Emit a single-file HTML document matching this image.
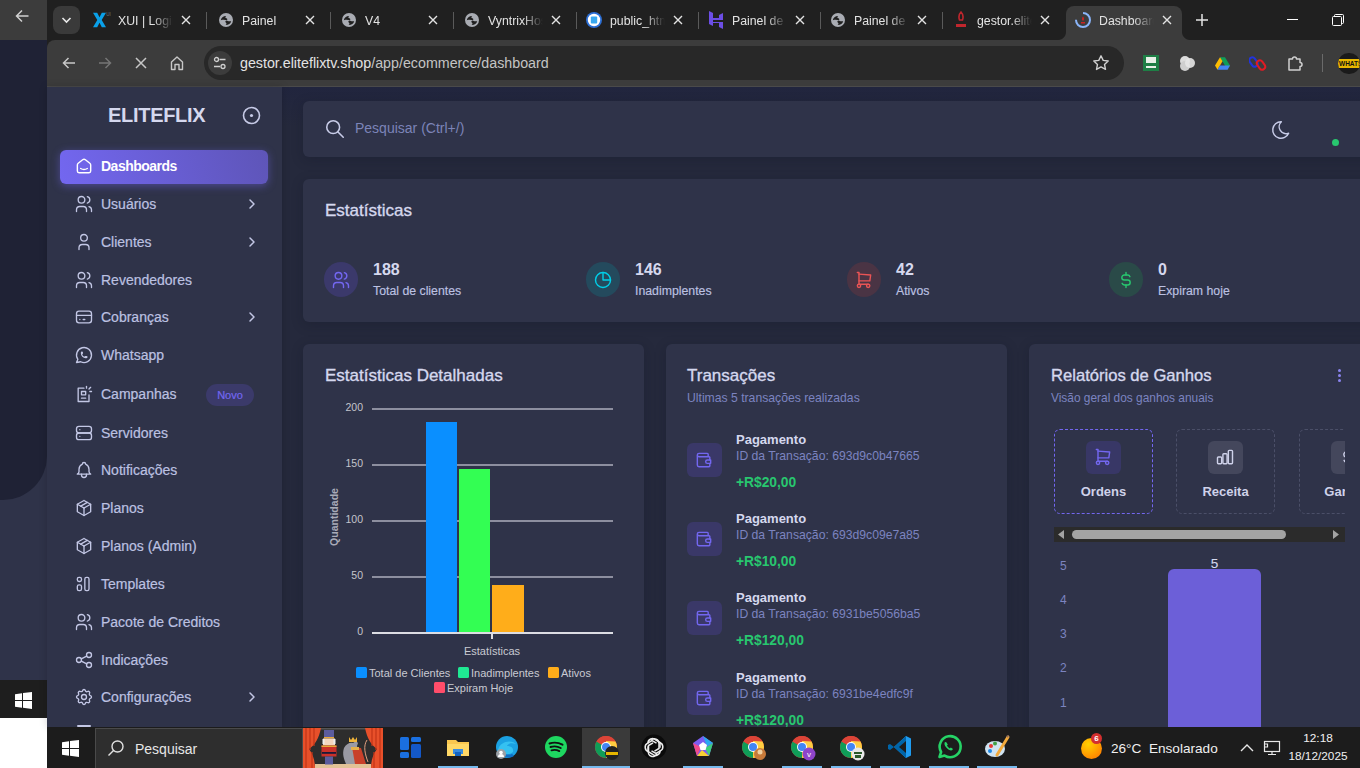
<!DOCTYPE html><html><head><meta charset="utf-8"><style>
*{margin:0;padding:0;box-sizing:border-box}
html,body{width:1360px;height:768px;overflow:hidden;background:#25293c;font-family:"Liberation Sans",sans-serif}
.a{position:absolute}
.t{position:absolute;white-space:nowrap}
.card{position:absolute;background:#2f3349;border-radius:6px;box-shadow:0 3px 12px rgba(15,20,34,.25)}
</style></head><body>
<div class="a" style="left:0;top:0;width:47px;height:40px;background:#3c3c3c"></div>
<svg class="a" style="left:14px;top:8px" width="16" height="16" viewBox="0 0 16 16"><path d="M14.5 8H2.5M8 2.5L2.5 8 8 13.5" stroke="#d0d0d0" stroke-width="1.5" fill="none"/></svg>
<div class="a" style="left:0;top:40px;width:47px;height:680px;background:#2f3349"></div>
<div class="a" style="left:0;top:40px;width:47px;height:460px;background:#1f2235;border-bottom-right-radius:44px"></div>
<div class="a" style="left:0;top:680px;width:47px;height:38px;background:#1e1e1e"></div>
<svg class="a" style="left:15px;top:692px" width="17" height="17" viewBox="0 0 17 17"><path fill="#fff" d="M0 2.3l7-1v6.8H0zM8 1.1L17 0v8.1H8zM0 9h7v6.8l-7-1zM8 9h9v8l-9-1.2z"/></svg>
<div class="a" style="left:0;top:718px;width:47px;height:50px;background:#ffffff"></div>

<div class="a" style="left:47px;top:0;width:1313px;height:40px;background:#202020"></div>
<div class="a" style="left:53px;top:6px;width:27px;height:28px;background:#3a3a3a;border-radius:8px"></div>
<svg class="a" style="left:61px;top:15px" width="11" height="10" viewBox="0 0 11 10"><path d="M1.5 3l4 4 4-4" stroke="#e8e8e8" stroke-width="1.6" fill="none"/></svg>
<div class="a" style="left:1066px;top:6px;width:116px;height:34px;background:#3c3c3c;border-radius:8px 8px 0 0"></div>
<div class="a" style="left:1058px;top:32px;width:8px;height:8px;background:radial-gradient(circle at 0 0,#202020 7.5px,#3c3c3c 8.5px)"></div>
<div class="a" style="left:1182px;top:32px;width:8px;height:8px;background:radial-gradient(circle at 100% 0,#202020 7.5px,#3c3c3c 8.5px)"></div>

<svg class="a" style="left:93px;top:12px" width="18" height="16" viewBox="0 0 18 16"><path d="M0 0.8h4.2l2.3 4.5 2.3-4.5H13L8.7 8 13 15.2H8.8L6.5 10.7 4.2 15.2H0L4.3 8z" fill="#0aa0e8"/><text x="13.3" y="4.2" font-size="4.5" fill="#777" font-family="Liberation Sans">UI</text></svg>
<div class="t" style="left:118px;top:14px;width:56px;overflow:hidden;font-size:12.3px;line-height:15px;color:#e3e3e3;-webkit-mask-image:linear-gradient(90deg,#000 62%,transparent 98%)">XUI | Login</div>
<svg class="a" style="left:181px;top:15px" width="10" height="10" viewBox="0 0 10 10"><path d="M1 1l8 8M9 1L1 9" stroke="#e3e3e3" stroke-width="1.4"/></svg>
<div class="a" style="left:206px;top:12px;width:1px;height:17px;background:#5a5a5a"></div>
<svg class="a" style="left:219px;top:13px" width="14" height="14" viewBox="0 0 14 14"><circle cx="7" cy="7" r="7" fill="#a9acb3"/><path d="M1.8 7.2C2.2 4.5 4.3 2.8 7.2 2.9 6.1 3.8 6 4.8 7.5 5.3 8.6 5.7 8.7 6.6 7.6 7.2 6 6.7 4 6.4 1.8 7.2z" fill="#202020"/><path d="M12.2 8.3C11.4 11 9.2 12.3 6.5 12.1 7.6 11.2 7.9 10.2 6.8 9.4 5.9 8.8 6.2 7.8 7.6 7.4 9.1 8.1 10.6 8.4 12.2 8.3z" fill="#202020"/></svg>
<div class="t" style="left:242px;top:14px;width:56px;overflow:hidden;font-size:12.3px;line-height:15px;color:#e3e3e3;-webkit-mask-image:linear-gradient(90deg,#000 62%,transparent 98%)">Painel</div>
<svg class="a" style="left:305px;top:15px" width="10" height="10" viewBox="0 0 10 10"><path d="M1 1l8 8M9 1L1 9" stroke="#e3e3e3" stroke-width="1.4"/></svg>
<div class="a" style="left:330px;top:12px;width:1px;height:17px;background:#5a5a5a"></div>
<svg class="a" style="left:342px;top:13px" width="14" height="14" viewBox="0 0 14 14"><circle cx="7" cy="7" r="7" fill="#a9acb3"/><path d="M1.8 7.2C2.2 4.5 4.3 2.8 7.2 2.9 6.1 3.8 6 4.8 7.5 5.3 8.6 5.7 8.7 6.6 7.6 7.2 6 6.7 4 6.4 1.8 7.2z" fill="#202020"/><path d="M12.2 8.3C11.4 11 9.2 12.3 6.5 12.1 7.6 11.2 7.9 10.2 6.8 9.4 5.9 8.8 6.2 7.8 7.6 7.4 9.1 8.1 10.6 8.4 12.2 8.3z" fill="#202020"/></svg>
<div class="t" style="left:365px;top:14px;width:56px;overflow:hidden;font-size:12.3px;line-height:15px;color:#e3e3e3;-webkit-mask-image:linear-gradient(90deg,#000 62%,transparent 98%)">V4</div>
<svg class="a" style="left:428px;top:15px" width="10" height="10" viewBox="0 0 10 10"><path d="M1 1l8 8M9 1L1 9" stroke="#e3e3e3" stroke-width="1.4"/></svg>
<div class="a" style="left:453px;top:12px;width:1px;height:17px;background:#5a5a5a"></div>
<svg class="a" style="left:465px;top:13px" width="14" height="14" viewBox="0 0 14 14"><circle cx="7" cy="7" r="7" fill="#a9acb3"/><path d="M1.8 7.2C2.2 4.5 4.3 2.8 7.2 2.9 6.1 3.8 6 4.8 7.5 5.3 8.6 5.7 8.7 6.6 7.6 7.2 6 6.7 4 6.4 1.8 7.2z" fill="#202020"/><path d="M12.2 8.3C11.4 11 9.2 12.3 6.5 12.1 7.6 11.2 7.9 10.2 6.8 9.4 5.9 8.8 6.2 7.8 7.6 7.4 9.1 8.1 10.6 8.4 12.2 8.3z" fill="#202020"/></svg>
<div class="t" style="left:488px;top:14px;width:56px;overflow:hidden;font-size:12.3px;line-height:15px;color:#e3e3e3;-webkit-mask-image:linear-gradient(90deg,#000 62%,transparent 98%)">VyntrixHost</div>
<svg class="a" style="left:551px;top:15px" width="10" height="10" viewBox="0 0 10 10"><path d="M1 1l8 8M9 1L1 9" stroke="#e3e3e3" stroke-width="1.4"/></svg>
<div class="a" style="left:576px;top:12px;width:1px;height:17px;background:#5a5a5a"></div>
<svg class="a" style="left:586px;top:12px" width="16" height="16" viewBox="0 0 16 16"><circle cx="8" cy="8" r="8" fill="#2c6fd6"/><circle cx="8" cy="8" r="6.2" fill="#fff"/><rect x="4.8" y="4.5" width="6.4" height="7" rx="1" fill="#38a8f0"/></svg>
<div class="t" style="left:610px;top:14px;width:56px;overflow:hidden;font-size:12.3px;line-height:15px;color:#e3e3e3;-webkit-mask-image:linear-gradient(90deg,#000 62%,transparent 98%)">public_html</div>
<svg class="a" style="left:673px;top:15px" width="10" height="10" viewBox="0 0 10 10"><path d="M1 1l8 8M9 1L1 9" stroke="#e3e3e3" stroke-width="1.4"/></svg>
<div class="a" style="left:698px;top:12px;width:1px;height:17px;background:#5a5a5a"></div>
<svg class="a" style="left:708px;top:11px" width="16" height="18" viewBox="0 0 16 18"><path fill="#6c4ee6" d="M1 0l4 2v5h6V4l4-2v7H5v2h10v7l-4-2v-4H5v3l-4-2z"/></svg>
<div class="t" style="left:732px;top:14px;width:56px;overflow:hidden;font-size:12.3px;line-height:15px;color:#e3e3e3;-webkit-mask-image:linear-gradient(90deg,#000 62%,transparent 98%)">Painel de</div>
<svg class="a" style="left:795px;top:15px" width="10" height="10" viewBox="0 0 10 10"><path d="M1 1l8 8M9 1L1 9" stroke="#e3e3e3" stroke-width="1.4"/></svg>
<div class="a" style="left:820px;top:12px;width:1px;height:17px;background:#5a5a5a"></div>
<svg class="a" style="left:831px;top:13px" width="14" height="14" viewBox="0 0 14 14"><circle cx="7" cy="7" r="7" fill="#a9acb3"/><path d="M1.8 7.2C2.2 4.5 4.3 2.8 7.2 2.9 6.1 3.8 6 4.8 7.5 5.3 8.6 5.7 8.7 6.6 7.6 7.2 6 6.7 4 6.4 1.8 7.2z" fill="#202020"/><path d="M12.2 8.3C11.4 11 9.2 12.3 6.5 12.1 7.6 11.2 7.9 10.2 6.8 9.4 5.9 8.8 6.2 7.8 7.6 7.4 9.1 8.1 10.6 8.4 12.2 8.3z" fill="#202020"/></svg>
<div class="t" style="left:854px;top:14px;width:56px;overflow:hidden;font-size:12.3px;line-height:15px;color:#e3e3e3;-webkit-mask-image:linear-gradient(90deg,#000 62%,transparent 98%)">Painel de</div>
<svg class="a" style="left:917px;top:15px" width="10" height="10" viewBox="0 0 10 10"><path d="M1 1l8 8M9 1L1 9" stroke="#e3e3e3" stroke-width="1.4"/></svg>
<div class="a" style="left:942px;top:12px;width:1px;height:17px;background:#5a5a5a"></div>
<svg class="a" style="left:953px;top:11px" width="16" height="18" viewBox="0 0 16 18"><path fill="none" stroke="#c0262d" stroke-width="1.6" d="M8 1c2 2 2.5 5 1.5 8h-3C5.5 6 6 3 8 1z"/><path fill="#c0262d" d="M3 13h10v3H3z"/></svg>
<div class="t" style="left:977px;top:14px;width:56px;overflow:hidden;font-size:12.3px;line-height:15px;color:#e3e3e3;-webkit-mask-image:linear-gradient(90deg,#000 62%,transparent 98%)">gestor.elite</div>
<svg class="a" style="left:1040px;top:15px" width="10" height="10" viewBox="0 0 10 10"><path d="M1 1l8 8M9 1L1 9" stroke="#e3e3e3" stroke-width="1.4"/></svg>
<svg class="a" style="left:1074px;top:11px" width="18" height="18" viewBox="0 0 18 18"><circle cx="9" cy="9" r="7" stroke="#8ab4f8" stroke-width="2" fill="none" stroke-dasharray="33 11" transform="rotate(-90 9 9)"/><path d="M9 5.5c1 1 1.2 2.5.7 4h-1.4c-.5-1.5-.3-3 .7-4z" fill="#c22"/><path d="M7 11h4v1.5H7z" fill="#c22"/></svg>
<div class="t" style="left:1099px;top:14px;width:56px;overflow:hidden;font-size:12.3px;line-height:15px;color:#e3e3e3;-webkit-mask-image:linear-gradient(90deg,#000 62%,transparent 98%)">Dashboard</div>
<svg class="a" style="left:1162px;top:15px" width="10" height="10" viewBox="0 0 10 10"><path d="M1 1l8 8M9 1L1 9" stroke="#e3e3e3" stroke-width="1.4"/></svg>
<svg class="a" style="left:1195px;top:13px" width="14" height="14" viewBox="0 0 14 14"><path d="M7 1v12M1 7h12" stroke="#e3e3e3" stroke-width="1.5"/></svg>
<div class="a" style="left:1287px;top:19px;width:11px;height:1px;background:#fff"></div>
<svg class="a" style="left:1332px;top:14px" width="12" height="12" viewBox="0 0 12 12"><path d="M2.5 2.5V1.5a1 1 0 0 1 1-1h7a1 1 0 0 1 1 1v7a1 1 0 0 1-1 1H9.5" stroke="#fff" fill="none"/><rect x="0.5" y="2.5" width="9" height="9" rx="1" stroke="#fff" fill="#202020"/></svg>

<div class="a" style="left:47px;top:40px;width:12px;height:12px;background:#202020"></div>
<div class="a" style="left:47px;top:40px;width:1313px;height:46px;background:#3c3c3c;border-top-left-radius:8px"></div>
<div class="a" style="left:47px;top:86px;width:1313px;height:1px;background:#4a4a4a"></div>
<svg class="a" style="left:61px;top:55px" width="16" height="16" viewBox="0 0 16 16"><path d="M14 8H2.5M7.5 3L2.5 8l5 5" stroke="#c7c7c7" stroke-width="1.5" fill="none"/></svg>
<svg class="a" style="left:97px;top:55px" width="16" height="16" viewBox="0 0 16 16"><path d="M2 8h11.5M8.5 3l5 5-5 5" stroke="#757575" stroke-width="1.5" fill="none"/></svg>
<svg class="a" style="left:135px;top:57px" width="12" height="12" viewBox="0 0 12 12"><path d="M1 1l10 10M11 1L1 11" stroke="#c7c7c7" stroke-width="1.5"/></svg>
<svg class="a" style="left:169px;top:55px" width="16" height="16" viewBox="0 0 16 16"><path d="M2.5 14.5V7L8 2l5.5 5v7.5h-3.5v-5h-4v5z" stroke="#c7c7c7" stroke-width="1.4" fill="none" stroke-linejoin="round"/></svg>
<div class="a" style="left:204px;top:46px;width:920px;height:34px;background:#282828;border-radius:17px"></div>
<div class="a" style="left:208px;top:51px;width:24px;height:24px;background:#3c3c3c;border-radius:12px"></div>
<svg class="a" style="left:212px;top:55px" width="16" height="16" viewBox="0 0 16 16"><circle cx="4.5" cy="4.5" r="2" stroke="#d0d0d0" stroke-width="1.3" fill="none"/><path d="M7.5 4.5h6M2 11.5h6" stroke="#d0d0d0" stroke-width="1.4"/><circle cx="11" cy="11.5" r="2" stroke="#d0d0d0" stroke-width="1.3" fill="none"/></svg>
<div class="t" style="left:240px;top:55px;font-size:14.25px;line-height:17px;color:#e3e3e3">gestor.eliteflixtv.shop<span style="color:#c4c4c4">/app/ecommerce/dashboard</span></div>
<svg class="a" style="left:1092px;top:54px" width="18" height="18" viewBox="0 0 18 18"><path d="M9 1.8l2.2 4.6 5 .6-3.7 3.4 1 5L9 12.9l-4.5 2.5 1-5L1.8 7l5-.6z" stroke="#d0d0d0" stroke-width="1.4" fill="none" stroke-linejoin="round"/></svg>
<div class="a" style="left:1143px;top:55px;width:16px;height:16px;background:#1e7e45"></div>
<div class="a" style="left:1146px;top:57px;width:10px;height:11px;background:#e8f0e8"></div>
<div class="a" style="left:1146px;top:63px;width:10px;height:3px;background:#1e7e45"></div>
<div class="a" style="left:1180px;top:56px;width:10px;height:10px;border-radius:5px;background:#dcdcdc"></div>
<div class="a" style="left:1180px;top:61px;width:10px;height:10px;border-radius:5px;background:#cfcfcf"></div>
<div class="a" style="left:1185px;top:58px;width:10px;height:10px;border-radius:5px;background:#e6e6e6;opacity:.9"></div>
<svg class="a" style="left:1215px;top:56px" width="15" height="14" viewBox="0 0 18 16"><path fill="#0f9d58" d="M6 1h6l6 10-3 5z"/><path fill="#fbbc04" d="M6 1L0 11l3 5 6-10z"/><path fill="#4285f4" d="M3 16h12l3-5H6z"/></svg>
<svg class="a" style="left:1249px;top:54px" width="18" height="18" viewBox="0 0 18 18"><rect x="1.5" y="3" width="6" height="10" rx="3" transform="rotate(-35 4.5 8)" stroke="#2233dd" stroke-width="2" fill="none"/><rect x="9" y="6" width="6" height="10" rx="3" transform="rotate(-35 12 11)" stroke="#e01b24" stroke-width="2" fill="none"/></svg>
<svg class="a" style="left:1286px;top:54px" width="18" height="18" viewBox="0 0 18 18"><path d="M3 5h3.5a2 2 0 1 1 4 0H14v3.5a2 2 0 1 1 0 4V16H3z" stroke="#d0d0d0" stroke-width="1.5" fill="none" stroke-linejoin="round"/></svg>
<div class="a" style="left:1322px;top:54px;width:1px;height:18px;background:#6a6a6a"></div>
<div class="a" style="left:1338px;top:53px;width:22px;height:21px;border-radius:11px;background:#1a1a1a;overflow:hidden"><div style="position:absolute;left:0;top:6px;width:22px;height:9px;background:#e8b800"></div><div style="position:absolute;left:1px;top:7px;font:bold 6.5px/7px 'Liberation Sans';color:#111">WHATS</div></div>

<div class="a" style="left:47px;top:87px;width:1313px;height:640px;background:#25293c"></div>
<div class="a" style="left:281px;top:87px;width:1079px;height:40px;background:linear-gradient(#21253e,#25293c)"></div>
<div class="a" style="left:47px;top:87px;width:235px;height:640px;background:#2f3349;box-shadow:0 0 8px rgba(0,0,0,.18)"></div>
<div class="t" style="left:108px;top:103px;font:bold 20px/24px 'Liberation Sans';letter-spacing:-0.3px;color:#d5d8ee">ELITEFLIX</div>
<svg class="a" style="left:242px;top:106px" width="19" height="19" viewBox="0 0 19 19"><circle cx="9.5" cy="9.5" r="8" stroke="#c6cae6" stroke-width="1.6" fill="none"/><circle cx="9.5" cy="9.5" r="1.6" fill="#c6cae6"/></svg>
<div class="a" style="left:60px;top:150px;width:208px;height:34px;border-radius:6px;background:linear-gradient(72deg,#7367f0 0%,#5e55b8 100%);box-shadow:0 2px 8px rgba(115,103,240,.45)"></div>
<svg class="a" style="left:74px;top:156px" width="20" height="20" viewBox="0 0 24 24" fill="none" stroke="#ffffff" stroke-width="1.7" stroke-linecap="round" stroke-linejoin="round"><path d="M19 8.71l-5.333 -4.148a2.666 2.666 0 0 0 -3.274 0l-5.334 4.148a2.665 2.665 0 0 0 -1.029 2.105v7.2a2 2 0 0 0 2 2h12a2 2 0 0 0 2 -2v-7.2c0 -.823 -.38 -1.6 -1.03 -2.105"/><path d="M16 15c-2.21 1.333 -5.792 1.333 -8 0"/></svg>
<div class="t" style="left:101px;top:158px;font:bold 14px/16px 'Liberation Sans';letter-spacing:-0.5px;color:#ffffff">Dashboards</div>
<svg class="a" style="left:74px;top:194px" width="20" height="20" viewBox="0 0 24 24" fill="none" stroke="#c3c7e5" stroke-width="1.6" stroke-linecap="round" stroke-linejoin="round"><path d="M5 7a4 4 0 1 0 8 0a4 4 0 1 0 -8 0"/><path d="M3 21v-2a4 4 0 0 1 4 -4h4a4 4 0 0 1 4 4v2"/><path d="M16 3.13a4 4 0 0 1 0 7.75"/><path d="M21 21v-2a4 4 0 0 0 -3 -3.85"/></svg>
<div class="t" style="left:101px;top:196px;font:14px/16px 'Liberation Sans';color:#bcc1e1;-webkit-text-stroke:0.2px #bcc1e1">Usuários</div>
<svg class="a" style="left:247px;top:198px" width="10" height="12" viewBox="0 0 10 12"><path d="M3 2l4 4-4 4" stroke="#c3c7e5" stroke-width="1.5" fill="none" stroke-linecap="round" stroke-linejoin="round"/></svg>
<svg class="a" style="left:74px;top:232px" width="20" height="20" viewBox="0 0 24 24" fill="none" stroke="#c3c7e5" stroke-width="1.6" stroke-linecap="round" stroke-linejoin="round"><path d="M8 7a4 4 0 1 0 8 0a4 4 0 0 0 -8 0"/><path d="M6 21v-2a4 4 0 0 1 4 -4h4a4 4 0 0 1 4 4v2"/></svg>
<div class="t" style="left:101px;top:234px;font:14px/16px 'Liberation Sans';color:#bcc1e1;-webkit-text-stroke:0.2px #bcc1e1">Clientes</div>
<svg class="a" style="left:247px;top:236px" width="10" height="12" viewBox="0 0 10 12"><path d="M3 2l4 4-4 4" stroke="#c3c7e5" stroke-width="1.5" fill="none" stroke-linecap="round" stroke-linejoin="round"/></svg>
<svg class="a" style="left:74px;top:270px" width="20" height="20" viewBox="0 0 24 24" fill="none" stroke="#c3c7e5" stroke-width="1.6" stroke-linecap="round" stroke-linejoin="round"><path d="M5 7a4 4 0 1 0 8 0a4 4 0 1 0 -8 0"/><path d="M3 21v-2a4 4 0 0 1 4 -4h4a4 4 0 0 1 4 4v2"/><path d="M16 3.13a4 4 0 0 1 0 7.75"/><path d="M21 21v-2a4 4 0 0 0 -3 -3.85"/></svg>
<div class="t" style="left:101px;top:272px;font:14px/16px 'Liberation Sans';color:#bcc1e1;-webkit-text-stroke:0.2px #bcc1e1">Revendedores</div>
<svg class="a" style="left:74px;top:307px" width="20" height="20" viewBox="0 0 24 24" fill="none" stroke="#c3c7e5" stroke-width="1.6" stroke-linecap="round" stroke-linejoin="round"><path d="M3 8a3 3 0 0 1 3 -3h12a3 3 0 0 1 3 3v8a3 3 0 0 1 -3 3h-12a3 3 0 0 1 -3 -3z"/><path d="M3 10l18 0"/><path d="M7 15l.01 0"/><path d="M11 15l2 0"/></svg>
<div class="t" style="left:101px;top:309px;font:14px/16px 'Liberation Sans';color:#bcc1e1;-webkit-text-stroke:0.2px #bcc1e1">Cobranças</div>
<svg class="a" style="left:247px;top:311px" width="10" height="12" viewBox="0 0 10 12"><path d="M3 2l4 4-4 4" stroke="#c3c7e5" stroke-width="1.5" fill="none" stroke-linecap="round" stroke-linejoin="round"/></svg>
<svg class="a" style="left:74px;top:345px" width="20" height="20" viewBox="0 0 24 24" fill="none" stroke="#c3c7e5" stroke-width="1.6" stroke-linecap="round" stroke-linejoin="round"><path d="M3 21l1.65 -3.8a9 9 0 1 1 3.4 2.9l-5.05 .9"/><path d="M9 10a.5 .5 0 0 0 1 0v-1a.5 .5 0 0 0 -1 0v1a5 5 0 0 0 5 5h1a.5 .5 0 0 0 0 -1h-1a.5 .5 0 0 0 0 1"/></svg>
<div class="t" style="left:101px;top:347px;font:14px/16px 'Liberation Sans';color:#bcc1e1;-webkit-text-stroke:0.2px #bcc1e1">Whatsapp</div>
<svg class="a" style="left:74px;top:384px" width="20" height="20" viewBox="0 0 24 24" fill="none" stroke="#c3c7e5" stroke-width="1.6" stroke-linecap="round" stroke-linejoin="round"><path d="M11.933 5h-6.933v16h13v-8"/><path d="M14 17h-5"/><path d="M9 13h5v-4h-5z"/><path d="M15 5v-2"/><path d="M18 6l2 -2"/><path d="M19 9h2"/></svg>
<div class="t" style="left:101px;top:386px;font:14px/16px 'Liberation Sans';color:#bcc1e1;-webkit-text-stroke:0.2px #bcc1e1">Campanhas</div>
<svg class="a" style="left:74px;top:423px" width="20" height="20" viewBox="0 0 24 24" fill="none" stroke="#c3c7e5" stroke-width="1.6" stroke-linecap="round" stroke-linejoin="round"><path d="M3 7a3 3 0 0 1 3 -3h12a3 3 0 0 1 3 3v2a3 3 0 0 1 -3 3h-12a3 3 0 0 1 -3 -3z"/><path d="M3 15a3 3 0 0 1 3 -3h12a3 3 0 0 1 3 3v2a3 3 0 0 1 -3 3h-12a3 3 0 0 1 -3 -3z"/><path d="M7 8l0 .01"/><path d="M7 16l0 .01"/></svg>
<div class="t" style="left:101px;top:425px;font:14px/16px 'Liberation Sans';color:#bcc1e1;-webkit-text-stroke:0.2px #bcc1e1">Servidores</div>
<svg class="a" style="left:74px;top:460px" width="20" height="20" viewBox="0 0 24 24" fill="none" stroke="#c3c7e5" stroke-width="1.6" stroke-linecap="round" stroke-linejoin="round"><path d="M10 5a2 2 0 1 1 4 0a7 7 0 0 1 4 6v3a4 4 0 0 0 2 3h-16a4 4 0 0 0 2 -3v-3a7 7 0 0 1 4 -6"/><path d="M9 17v1a3 3 0 0 0 6 0v-1"/></svg>
<div class="t" style="left:101px;top:462px;font:14px/16px 'Liberation Sans';color:#bcc1e1;-webkit-text-stroke:0.2px #bcc1e1">Notificações</div>
<svg class="a" style="left:74px;top:498px" width="20" height="20" viewBox="0 0 24 24" fill="none" stroke="#c3c7e5" stroke-width="1.6" stroke-linecap="round" stroke-linejoin="round"><path d="M12 3l8 4.5l0 9l-8 4.5l-8 -4.5l0 -9l8 -4.5"/><path d="M12 12l8 -4.5"/><path d="M12 12l0 9"/><path d="M12 12l-8 -4.5"/><path d="M16 5.25l-8 4.5"/></svg>
<div class="t" style="left:101px;top:500px;font:14px/16px 'Liberation Sans';color:#bcc1e1;-webkit-text-stroke:0.2px #bcc1e1">Planos</div>
<svg class="a" style="left:74px;top:536px" width="20" height="20" viewBox="0 0 24 24" fill="none" stroke="#c3c7e5" stroke-width="1.6" stroke-linecap="round" stroke-linejoin="round"><path d="M12 3l8 4.5l0 9l-8 4.5l-8 -4.5l0 -9l8 -4.5"/><path d="M12 12l8 -4.5"/><path d="M12 12l0 9"/><path d="M12 12l-8 -4.5"/><path d="M16 5.25l-8 4.5"/></svg>
<div class="t" style="left:101px;top:538px;font:14px/16px 'Liberation Sans';color:#bcc1e1;-webkit-text-stroke:0.2px #bcc1e1">Planos (Admin)</div>
<svg class="a" style="left:74px;top:574px" width="20" height="20" viewBox="0 0 24 24" fill="none" stroke="#c3c7e5" stroke-width="1.6" stroke-linecap="round" stroke-linejoin="round"><path d="M4 6a2 2 0 0 1 2 -2h1a2 2 0 0 1 2 2v1a2 2 0 0 1 -2 2h-1a2 2 0 0 1 -2 -2z"/><path d="M4 15a2 2 0 0 1 2 -2h1a2 2 0 0 1 2 2v3a2 2 0 0 1 -2 2h-1a2 2 0 0 1 -2 -2z"/><path d="M13 6a2 2 0 0 1 2 -2h1a2 2 0 0 1 2 2v12a2 2 0 0 1 -2 2h-1a2 2 0 0 1 -2 -2z"/></svg>
<div class="t" style="left:101px;top:576px;font:14px/16px 'Liberation Sans';color:#bcc1e1;-webkit-text-stroke:0.2px #bcc1e1">Templates</div>
<svg class="a" style="left:74px;top:612px" width="20" height="20" viewBox="0 0 24 24" fill="none" stroke="#c3c7e5" stroke-width="1.6" stroke-linecap="round" stroke-linejoin="round"><path d="M5 7a4 4 0 1 0 8 0a4 4 0 1 0 -8 0"/><path d="M3 21v-2a4 4 0 0 1 4 -4h4a4 4 0 0 1 4 4v2"/><path d="M16 3.13a4 4 0 0 1 0 7.75"/><path d="M21 21v-2a4 4 0 0 0 -3 -3.85"/></svg>
<div class="t" style="left:101px;top:614px;font:14px/16px 'Liberation Sans';color:#bcc1e1;-webkit-text-stroke:0.2px #bcc1e1">Pacote de Creditos</div>
<svg class="a" style="left:74px;top:650px" width="20" height="20" viewBox="0 0 24 24" fill="none" stroke="#c3c7e5" stroke-width="1.6" stroke-linecap="round" stroke-linejoin="round"><path d="M3 12a3 3 0 1 0 6 0a3 3 0 1 0 -6 0"/><path d="M15 6a3 3 0 1 0 6 0a3 3 0 1 0 -6 0"/><path d="M15 18a3 3 0 1 0 6 0a3 3 0 1 0 -6 0"/><path d="M8.7 10.7l6.6 -3.4"/><path d="M8.7 13.3l6.6 3.4"/></svg>
<div class="t" style="left:101px;top:652px;font:14px/16px 'Liberation Sans';color:#bcc1e1;-webkit-text-stroke:0.2px #bcc1e1">Indicações</div>
<svg class="a" style="left:74px;top:687px" width="20" height="20" viewBox="0 0 24 24" fill="none" stroke="#c3c7e5" stroke-width="1.6" stroke-linecap="round" stroke-linejoin="round"><path d="M10.325 4.317c.426 -1.756 2.924 -1.756 3.35 0a1.724 1.724 0 0 0 2.573 1.066c1.543 -.94 3.31 .826 2.37 2.37a1.724 1.724 0 0 0 1.065 2.572c1.756 .426 1.756 2.924 0 3.35a1.724 1.724 0 0 0 -1.066 2.573c.94 1.543 -.826 3.31 -2.37 2.37a1.724 1.724 0 0 0 -2.572 1.065c-.426 1.756 -2.924 1.756 -3.35 0a1.724 1.724 0 0 0 -2.573 -1.066c-1.543 .94 -3.31 -.826 -2.37 -2.37a1.724 1.724 0 0 0 -1.065 -2.572c-1.756 -.426 -1.756 -2.924 0 -3.35a1.724 1.724 0 0 0 1.066 -2.573c-.94 -1.543 .826 -3.31 2.37 -2.37c1 .608 2.296 .07 2.572 -1.065z"/><path d="M9 12a3 3 0 1 0 6 0a3 3 0 0 0 -6 0"/></svg>
<div class="t" style="left:101px;top:689px;font:14px/16px 'Liberation Sans';color:#bcc1e1;-webkit-text-stroke:0.2px #bcc1e1">Configurações</div>
<svg class="a" style="left:247px;top:691px" width="10" height="12" viewBox="0 0 10 12"><path d="M3 2l4 4-4 4" stroke="#c3c7e5" stroke-width="1.5" fill="none" stroke-linecap="round" stroke-linejoin="round"/></svg>
<div class="a" style="left:206px;top:384px;width:48px;height:22px;border-radius:11px;background:#3b3a6a"></div>
<div class="t" style="left:206px;top:385px;width:48px;text-align:center;font:11px/21px 'Liberation Sans';color:#7367f0;-webkit-text-stroke:0.2px #7367f0">Novo</div>
<div class="a" style="left:77px;top:725px;width:14px;height:2px;background:#c3c7e5;border-radius:1px"></div>
<div class="card" style="left:303px;top:101px;width:1100px;height:56px"></div>
<svg class="a" style="left:324px;top:118px" width="22" height="22" viewBox="0 0 24 24" fill="none" stroke="#c8cce8" stroke-width="1.7" stroke-linecap="round"><circle cx="10" cy="10" r="7"/><path d="M21 21l-6-6"/></svg>
<div class="t" style="left:355px;top:120px;font:14px/17px 'Liberation Sans';color:#7c84b8">Pesquisar (Ctrl+/)</div>
<svg class="a" style="left:1270px;top:119px" width="22" height="22" viewBox="0 0 24 24" fill="none" stroke="#c8cce8" stroke-width="1.6" stroke-linecap="round" stroke-linejoin="round"><path d="M12 3c.132 0 .263 0 .393 0a7.5 7.5 0 0 0 7.92 12.446a9 9 0 1 1 -8.313 -12.454z"/></svg>
<div class="a" style="left:1332px;top:139px;width:7px;height:7px;border-radius:4px;background:#28c76f"></div>
<div class="card" style="left:303px;top:179px;width:1100px;height:143px"></div>
<div class="t" style="left:325px;top:201px;font:17px/20px 'Liberation Sans';color:#d5d8ee;-webkit-text-stroke:0.35px #d5d8ee">Estatísticas</div>
<div class="a" style="left:324px;top:262px;width:34px;height:35px;border-radius:18px;background:#3b396b"></div>
<svg class="a" style="left:331px;top:270px" width="20" height="20" viewBox="0 0 24 24" fill="none" stroke="#7367f0" stroke-width="1.7" stroke-linecap="round" stroke-linejoin="round"><path d="M5 7a4 4 0 1 0 8 0a4 4 0 1 0 -8 0"/><path d="M3 21v-2a4 4 0 0 1 4 -4h4a4 4 0 0 1 4 4v2"/><path d="M16 3.13a4 4 0 0 1 0 7.75"/><path d="M21 21v-2a4 4 0 0 0 -3 -3.85"/></svg>
<div class="t" style="left:373px;top:260px;font:bold 16px/19px 'Liberation Sans';color:#d5d8ee">188</div>
<div class="t" style="left:373px;top:284px;font:12.3px/15px 'Liberation Sans';color:#bcc1e1;-webkit-text-stroke:0.15px #bcc1e1">Total de clientes</div>
<div class="a" style="left:586px;top:262px;width:34px;height:35px;border-radius:18px;background:#244a5d"></div>
<svg class="a" style="left:593px;top:270px" width="20" height="20" viewBox="0 0 24 24" fill="none" stroke="#00cfe8" stroke-width="1.7" stroke-linecap="round" stroke-linejoin="round"><circle cx="12" cy="12" r="9"/><path d="M12 3v9h9"/></svg>
<div class="t" style="left:635px;top:260px;font:bold 16px/19px 'Liberation Sans';color:#d5d8ee">146</div>
<div class="t" style="left:635px;top:284px;font:12.3px/15px 'Liberation Sans';color:#bcc1e1;-webkit-text-stroke:0.15px #bcc1e1">Inadimplentes</div>
<div class="a" style="left:847px;top:262px;width:34px;height:35px;border-radius:18px;background:#4a3444"></div>
<svg class="a" style="left:854px;top:270px" width="20" height="20" viewBox="0 0 24 24" fill="none" stroke="#ea5455" stroke-width="1.7" stroke-linecap="round" stroke-linejoin="round"><path d="M4 19a2 2 0 1 0 4 0a2 2 0 0 0 -4 0"/><path d="M15 19a2 2 0 1 0 4 0a2 2 0 0 0 -4 0"/><path d="M17 17h-11v-14h-2"/><path d="M6 5l14 1l-1 7h-13"/></svg>
<div class="t" style="left:896px;top:260px;font:bold 16px/19px 'Liberation Sans';color:#d5d8ee">42</div>
<div class="t" style="left:896px;top:284px;font:12.3px/15px 'Liberation Sans';color:#bcc1e1;-webkit-text-stroke:0.15px #bcc1e1">Ativos</div>
<div class="a" style="left:1109px;top:262px;width:34px;height:35px;border-radius:18px;background:#2a4a48"></div>
<svg class="a" style="left:1116px;top:270px" width="20" height="20" viewBox="0 0 24 24" fill="none" stroke="#28c76f" stroke-width="1.7" stroke-linecap="round" stroke-linejoin="round"><path d="M16.7 8a3 3 0 0 0 -2.7 -2h-4a3 3 0 0 0 0 6h4a3 3 0 0 1 0 6h-4a3 3 0 0 1 -2.7 -2"/><path d="M12 3v3m0 12v3"/></svg>
<div class="t" style="left:1158px;top:260px;font:bold 16px/19px 'Liberation Sans';color:#d5d8ee">0</div>
<div class="t" style="left:1158px;top:284px;font:12.3px/15px 'Liberation Sans';color:#bcc1e1;-webkit-text-stroke:0.15px #bcc1e1">Expiram hoje</div>
<div class="card" style="left:303px;top:344px;width:341px;height:420px"></div>
<div class="t" style="left:325px;top:366px;font:17px/20px 'Liberation Sans';color:#d5d8ee;-webkit-text-stroke:0.35px #d5d8ee">Estatísticas Detalhadas</div>
<svg class="a" style="left:303px;top:344px" width="341" height="383" viewBox="303 344 341 383"><rect x="372" y="408" width="241" height="2" fill="#8d8f9f"/><text x="363" y="411" text-anchor="end" font-family="Liberation Sans" font-size="10.5" fill="#c4c5cc">200</text><rect x="372" y="464" width="241" height="2" fill="#8d8f9f"/><text x="363" y="467" text-anchor="end" font-family="Liberation Sans" font-size="10.5" fill="#c4c5cc">150</text><rect x="372" y="520" width="241" height="2" fill="#8d8f9f"/><text x="363" y="523" text-anchor="end" font-family="Liberation Sans" font-size="10.5" fill="#c4c5cc">100</text><rect x="372" y="576" width="241" height="2" fill="#8d8f9f"/><text x="363" y="579" text-anchor="end" font-family="Liberation Sans" font-size="10.5" fill="#c4c5cc">50</text><text x="363" y="635" text-anchor="end" font-family="Liberation Sans" font-size="10.5" fill="#c4c5cc">0</text><rect x="426" y="422" width="31" height="211" fill="#0a8fff"/><rect x="459" y="469" width="31" height="164" fill="#33fe53"/><rect x="492" y="585" width="32" height="48" fill="#ffad1a"/><rect x="372" y="632" width="241" height="2" fill="#dcdde3"/><rect x="491" y="634" width="2" height="5" fill="#dcdde3"/><text transform="translate(338 517) rotate(-90)" text-anchor="middle" font-family="Liberation Sans" font-weight="bold" font-size="10.5" fill="#a9abb8">Quantidade</text><text x="492" y="655" text-anchor="middle" font-family="Liberation Sans" font-size="11" fill="#c9cad2">Estatísticas</text><rect x="356" y="667" width="11" height="11" rx="1.5" fill="#0a8fff"/><text x="369" y="677" font-family="Liberation Sans" font-size="11" fill="#c9cad2">Total de Clientes</text><rect x="458" y="667" width="11" height="11" rx="1.5" fill="#1fe893"/><text x="471" y="677" font-family="Liberation Sans" font-size="11" fill="#c9cad2">Inadimplentes</text><rect x="548" y="667" width="11" height="11" rx="1.5" fill="#ffad1a"/><text x="561" y="677" font-family="Liberation Sans" font-size="11" fill="#c9cad2">Ativos</text><rect x="434" y="682" width="11" height="11" rx="1.5" fill="#ff4d6a"/><text x="447" y="692" font-family="Liberation Sans" font-size="11" fill="#c9cad2">Expiram Hoje</text></svg>
<div class="card" style="left:666px;top:344px;width:341px;height:420px"></div>
<div class="t" style="left:687px;top:366px;font:17px/20px 'Liberation Sans';color:#d5d8ee;-webkit-text-stroke:0.35px #d5d8ee">Transações</div>
<div class="t" style="left:687px;top:391px;font:12.2px/15px 'Liberation Sans';color:#7c84c0">Ultimas 5 transações realizadas</div>
<div class="a" style="left:687px;top:443px;width:35px;height:34px;border-radius:6px;background:#3a3868"></div>
<svg class="a" style="left:694px;top:450px" width="20" height="20" viewBox="0 0 24 24" fill="none" stroke="#7367f0" stroke-width="1.7" stroke-linecap="round" stroke-linejoin="round"><path d="M17 8v-3a1 1 0 0 0 -1 -1h-10a2 2 0 0 0 0 4h12a1 1 0 0 1 1 1v3m0 4v3a1 1 0 0 1 -1 1h-12a2 2 0 0 1 -2 -2v-12"/><path d="M20 12v4h-4a2 2 0 0 1 0 -4h4"/></svg>
<div class="t" style="left:736px;top:432px;font:bold 13px/15px 'Liberation Sans';color:#d5d8ee">Pagamento</div>
<div class="t" style="left:736px;top:449px;font:12.2px/15px 'Liberation Sans';color:#7c84c0">ID da Transação: 693d9c0b47665</div>
<div class="t" style="left:736px;top:475px;font:bold 13.8px/16px 'Liberation Sans';color:#28c76f">+R$20,00</div>
<div class="a" style="left:687px;top:522px;width:35px;height:34px;border-radius:6px;background:#3a3868"></div>
<svg class="a" style="left:694px;top:529px" width="20" height="20" viewBox="0 0 24 24" fill="none" stroke="#7367f0" stroke-width="1.7" stroke-linecap="round" stroke-linejoin="round"><path d="M17 8v-3a1 1 0 0 0 -1 -1h-10a2 2 0 0 0 0 4h12a1 1 0 0 1 1 1v3m0 4v3a1 1 0 0 1 -1 1h-12a2 2 0 0 1 -2 -2v-12"/><path d="M20 12v4h-4a2 2 0 0 1 0 -4h4"/></svg>
<div class="t" style="left:736px;top:511px;font:bold 13px/15px 'Liberation Sans';color:#d5d8ee">Pagamento</div>
<div class="t" style="left:736px;top:528px;font:12.2px/15px 'Liberation Sans';color:#7c84c0">ID da Transação: 693d9c09e7a85</div>
<div class="t" style="left:736px;top:554px;font:bold 13.8px/16px 'Liberation Sans';color:#28c76f">+R$10,00</div>
<div class="a" style="left:687px;top:601px;width:35px;height:34px;border-radius:6px;background:#3a3868"></div>
<svg class="a" style="left:694px;top:608px" width="20" height="20" viewBox="0 0 24 24" fill="none" stroke="#7367f0" stroke-width="1.7" stroke-linecap="round" stroke-linejoin="round"><path d="M17 8v-3a1 1 0 0 0 -1 -1h-10a2 2 0 0 0 0 4h12a1 1 0 0 1 1 1v3m0 4v3a1 1 0 0 1 -1 1h-12a2 2 0 0 1 -2 -2v-12"/><path d="M20 12v4h-4a2 2 0 0 1 0 -4h4"/></svg>
<div class="t" style="left:736px;top:590px;font:bold 13px/15px 'Liberation Sans';color:#d5d8ee">Pagamento</div>
<div class="t" style="left:736px;top:607px;font:12.2px/15px 'Liberation Sans';color:#7c84c0">ID da Transação: 6931be5056ba5</div>
<div class="t" style="left:736px;top:633px;font:bold 13.8px/16px 'Liberation Sans';color:#28c76f">+R$120,00</div>
<div class="a" style="left:687px;top:681px;width:35px;height:34px;border-radius:6px;background:#3a3868"></div>
<svg class="a" style="left:694px;top:688px" width="20" height="20" viewBox="0 0 24 24" fill="none" stroke="#7367f0" stroke-width="1.7" stroke-linecap="round" stroke-linejoin="round"><path d="M17 8v-3a1 1 0 0 0 -1 -1h-10a2 2 0 0 0 0 4h12a1 1 0 0 1 1 1v3m0 4v3a1 1 0 0 1 -1 1h-12a2 2 0 0 1 -2 -2v-12"/><path d="M20 12v4h-4a2 2 0 0 1 0 -4h4"/></svg>
<div class="t" style="left:736px;top:670px;font:bold 13px/15px 'Liberation Sans';color:#d5d8ee">Pagamento</div>
<div class="t" style="left:736px;top:687px;font:12.2px/15px 'Liberation Sans';color:#7c84c0">ID da Transação: 6931be4edfc9f</div>
<div class="t" style="left:736px;top:713px;font:bold 13.8px/16px 'Liberation Sans';color:#28c76f">+R$120,00</div>
<div class="card" style="left:1029px;top:344px;width:341px;height:420px"></div>
<div class="t" style="left:1051px;top:366px;font:16.6px/20px 'Liberation Sans';color:#d5d8ee;-webkit-text-stroke:0.35px #d5d8ee">Relatórios de Ganhos</div>
<div class="t" style="left:1051px;top:391px;font:11.9px/15px 'Liberation Sans';color:#7c84c0">Visão geral dos ganhos anuais</div>
<div class="a" style="left:1338px;top:369px;width:3px;height:3px;border-radius:2px;background:#8b84f0"></div>
<div class="a" style="left:1338px;top:374px;width:3px;height:3px;border-radius:2px;background:#8b84f0"></div>
<div class="a" style="left:1338px;top:379px;width:3px;height:3px;border-radius:2px;background:#8b84f0"></div>
<div class="a" style="left:1054px;top:429px;width:291px;height:86px;overflow:hidden"><div class="a" style="left:0;top:0;width:99px;height:85px;border:1px dashed #7367f0;border-radius:6px"></div><div class="a" style="left:32px;top:12px;width:35px;height:33px;border-radius:6px;background:#383766"></div><svg style="position:absolute;left:39px;top:18px" width="20" height="20" viewBox="0 0 24 24" fill="none" stroke="#7367f0" stroke-width="1.7" stroke-linecap="round" stroke-linejoin="round"><path d="M4 19a2 2 0 1 0 4 0a2 2 0 0 0 -4 0"/><path d="M15 19a2 2 0 1 0 4 0a2 2 0 0 0 -4 0"/><path d="M17 17h-11v-14h-2"/><path d="M6 5l14 1l-1 7h-13"/></svg><div class="t" style="left:0;top:55px;width:99px;text-align:center;font:bold 13px/16px 'Liberation Sans';color:#cfd2ea">Ordens</div><div class="a" style="left:122px;top:0;width:99px;height:85px;border:1px dashed #4b4f68;border-radius:6px"></div><div class="a" style="left:154px;top:12px;width:35px;height:33px;border-radius:6px;background:#44475c"></div><svg style="position:absolute;left:161px;top:18px" width="20" height="20" viewBox="0 0 24 24" fill="none" stroke="#cfd2ea" stroke-width="1.7" stroke-linejoin="round"><rect x="3" y="12" width="5" height="8" rx="1"/><rect x="9.5" y="8" width="5" height="12" rx="1"/><rect x="16" y="4" width="5" height="16" rx="1"/></svg><div class="t" style="left:122px;top:55px;width:99px;text-align:center;font:bold 13px/16px 'Liberation Sans';color:#cfd2ea">Receita</div><div class="a" style="left:245px;top:0;width:99px;height:85px;border:1px dashed #4b4f68;border-radius:6px"></div><div class="a" style="left:277px;top:12px;width:35px;height:33px;border-radius:6px;background:#44475c"></div><svg style="position:absolute;left:284px;top:18px" width="20" height="20" viewBox="0 0 24 24" fill="none" stroke="#cfd2ea" stroke-width="1.7" stroke-linecap="round"><path d="M16.7 8a3 3 0 0 0 -2.7 -2h-4a3 3 0 0 0 0 6h4a3 3 0 0 1 0 6h-4a3 3 0 0 1 -2.7 -2"/><path d="M12 3v3m0 12v3"/></svg><div class="t" style="left:245px;top:55px;width:99px;text-align:center;font:bold 13px/16px 'Liberation Sans';color:#cfd2ea">Ganhos</div></div>
<div class="a" style="left:1054px;top:527px;width:291px;height:15px;background:#2b2b2b"></div>
<div class="a" style="left:1072px;top:530px;width:214px;height:9px;border-radius:5px;background:#a3a3a3"></div>
<svg class="a" style="left:1058px;top:530px" width="7" height="9" viewBox="0 0 7 9"><path d="M6 0v9L0 4.5z" fill="#a3a3a3"/></svg>
<svg class="a" style="left:1333px;top:530px" width="7" height="9" viewBox="0 0 7 9"><path d="M0 0v9l6-4.5z" fill="#a3a3a3"/></svg>
<div class="t" style="left:1060px;top:559px;font:12px/14px 'Liberation Sans';color:#7c84c0">5</div>
<div class="t" style="left:1060px;top:593px;font:12px/14px 'Liberation Sans';color:#7c84c0">4</div>
<div class="t" style="left:1060px;top:627px;font:12px/14px 'Liberation Sans';color:#7c84c0">3</div>
<div class="t" style="left:1060px;top:661px;font:12px/14px 'Liberation Sans';color:#7c84c0">2</div>
<div class="t" style="left:1060px;top:696px;font:12px/14px 'Liberation Sans';color:#7c84c0">1</div>
<div class="a" style="left:1168px;top:569px;width:93px;height:200px;border-radius:6px 6px 0 0;background:#6c5fd8"></div>
<div class="t" style="left:1168px;top:556px;width:93px;text-align:center;font:13.5px/16px 'Liberation Sans';color:#d5d8ee;-webkit-text-stroke:0.1px #d5d8ee">5</div>
<div class="a" style="left:47px;top:727px;width:1313px;height:41px;background:#1c1c1c"></div>
<svg class="a" style="left:62px;top:740px" width="17" height="17" viewBox="0 0 17 17"><path fill="#fff" d="M0 2.3l7-1v6.8H0zM8 1.1L17 0v8.1H8zM0 9h7v6.8l-7-1zM8 9h9v8l-9-1.2z"/></svg>
<div class="a" style="left:95px;top:728px;width:208px;height:40px;background:#2e2e2e;border:1px solid #4a4a4a;border-bottom:none"></div>
<svg class="a" style="left:106px;top:738px" width="20" height="20" viewBox="0 0 20 20"><circle cx="11.5" cy="8.5" r="5.5" stroke="#e0e0e0" stroke-width="1.4" fill="none"/><path d="M7.5 12.5L2.5 17.5" stroke="#e0e0e0" stroke-width="1.5"/></svg>
<div class="t" style="left:135px;top:740px;font:14px/18px 'Liberation Sans';color:#e6e6e6">Pesquisar</div>
<svg class="a" style="left:303px;top:728px" width="80" height="40" viewBox="0 0 80 40"><rect width="80" height="40" fill="#2d2d2d"/><rect width="80" height="1.5" fill="#555"/><path d="M0 0h18c-2 10-6 17-12 21 4 5 6 12 6 19H0z" fill="#e8502a"/><path d="M3 0v40M7 0v22M11 0v18M9 24v16" stroke="#c23418" stroke-width="1.2"/><path d="M62 0h18v40H68c0-7 2-14 6-19-6-4-10-11-12-21z" fill="#e8502a"/><path d="M77 0v40M73 0v22M69 0v18M71 24v16" stroke="#c23418" stroke-width="1.2"/><path d="M12 36h56v4H12z" fill="#e2c296"/><rect x="21" y="2" width="10" height="8" fill="#5b5c9e"/><rect x="21" y="9" width="10" height="1.5" fill="#e7a83a"/><rect x="20" y="10.5" width="12" height="7" fill="#f3d6c0"/><rect x="19.5" y="11" width="2" height="5" fill="#eee"/><rect x="30.5" y="11" width="2" height="5" fill="#eee"/><rect x="18.5" y="17.5" width="15" height="11" fill="#c9302a"/><rect x="18.5" y="17.5" width="15" height="1.5" fill="#e7a83a"/><rect x="19" y="24" width="14" height="1.8" fill="#1a1a3a"/><rect x="22" y="28.5" width="8" height="8" fill="#5b5c9e"/><path d="M41 20c2-4 6-6 9-5l3-2 2 2-1 3c1 4 0 10 2 18H43c-2-5-4-10-2-16z" fill="#9a9aa3"/><path d="M46 9l2 3 2-3 2 3 2-3v5h-8z" fill="#f0b43a"/><path d="M49 19l9 1 5 16H52z" fill="#c8402a"/><path d="M48 19h8v3h-8z" fill="#e7b048"/><path d="M64 12c-4 6-2 14 1 22" stroke="#e0a080" stroke-width="1" fill="none"/></svg>
<svg class="a" style="left:396px;top:733px" width="28" height="28" viewBox="0 0 28 28"><rect x="4" y="4" width="9" height="13" rx="1.5" fill="#1a6fe0"/><rect x="15" y="4" width="10" height="5" rx="1.5" fill="#1a6fe0"/><rect x="4" y="19" width="9" height="6" rx="1.5" fill="#1a6fe0"/><rect x="15" y="11" width="10" height="14" rx="1.5" fill="#1458c8"/></svg>
<svg class="a" style="left:444px;top:733px" width="28" height="28" viewBox="0 0 28 28"><path d="M3 7h9l2 2h11v14H3z" fill="#f9c74f"/><path d="M3 11h22v12H3z" fill="#ffd866"/><rect x="9" y="16" width="10" height="5" fill="#3a8dde"/><rect x="11" y="19" width="6" height="4" fill="#1565c0"/></svg>
<div class="a" style="left:438px;top:766px;width:40px;height:2px;background:#76b9ed"></div>
<svg class="a" style="left:493px;top:733px" width="28" height="28" viewBox="0 0 28 28"><circle cx="14" cy="14" r="11" fill="#1ba1e2"/><path d="M5 17c2-9 14-11 19-5-2-2-8-3-10 1 4 0 7 2 6 6-5 4-14 3-15-2z" fill="#35c1f1"/><path d="M8 20c2 3 8 4 12 2" stroke="#0f6fc6" stroke-width="3" fill="none"/><circle cx="8" cy="21" r="5" fill="#9aa0a6"/><circle cx="8" cy="19.5" r="1.8" fill="#fff"/><path d="M5 24a3 3 0 0 1 6 0" fill="#fff"/></svg>
<svg class="a" style="left:542px;top:733px" width="28" height="28" viewBox="0 0 28 28"><circle cx="14" cy="14" r="11" fill="#1ed760"/><path d="M7.5 10.5c4-1.3 9-1 13 1.2M8.5 14c3.3-1 7.2-.7 10.2 1M9.5 17.3c2.6-.7 5.4-.5 7.8.8" stroke="#111" stroke-width="1.9" fill="none" stroke-linecap="round"/></svg>
<div class="a" style="left:582px;top:728px;width:48px;height:40px;background:#3a3a3a"></div>
<svg class="a" style="left:592px;top:733px" width="28" height="28" viewBox="0 0 28 28"><circle cx="14" cy="14" r="11" fill="#db4437"/><path d="M14 14L4.5 8.5A11 11 0 0 0 14 25z" fill="#0f9d58"/><path d="M14 14h11A11 11 0 0 1 14 25z" fill="#ffcd40"/><path d="M14 14L4.5 8.5A11 11 0 0 1 14 3h0A11 11 0 0 1 23.5 8.5z" fill="#db4437"/><path d="M14 14h11a11 11 0 0 0-1.5-5.5L14 8z" fill="#ffcd40"/><circle cx="14" cy="14" r="5" fill="#fff"/><circle cx="14" cy="14" r="4" fill="#4285f4"/><circle cx="20" cy="20" r="7" fill="#222"/><path d="M14 19h12v3H14z" fill="#e6b600"/></svg>
<div class="a" style="left:582px;top:766px;width:48px;height:2px;background:#76b9ed"></div>
<svg class="a" style="left:640px;top:733px" width="28" height="28" viewBox="0 0 28 28"><circle cx="14" cy="14" r="12.5" fill="#0a0a0a"/><g stroke="#ececec" stroke-width="1.5" fill="none"><path d="M11 7.5a4.5 4.5 0 0 1 8 3v5l-4.5 2.6"/><path d="M19.5 9.5a4.5 4.5 0 0 1 .8 8.4l-4.3 2.5-4.5-2.6" /><path d="M20 17.5a4.5 4.5 0 0 1-7.7 3.5l-4.3-2.5v-5.2"/><path d="M17 20.5a4.5 4.5 0 0 1-8.5-3v-5l4.5-2.6"/><path d="M8.5 18.5a4.5 4.5 0 0 1-.8-8.4l4.3-2.5 4.5 2.6"/><path d="M8 10.5a4.5 4.5 0 0 1 7.7-3.5l4.3 2.5v5.2"/></g></svg>
<svg class="a" style="left:689px;top:733px" width="28" height="28" viewBox="0 0 28 28"><path d="M14 3l10 7-4 13H8L4 10z" fill="#7b5cf0"/><path d="M14 3l10 7-6 3z" fill="#2aa8f0"/><path d="M24 10l-4 13-4-8z" fill="#3ccf7a"/><path d="M20 23H8l5-6z" fill="#f5d033"/><path d="M8 23L4 10l8 4z" fill="#f04a8a"/><path d="M10 12l4-3 4 3-1.5 5h-5z" fill="#fff"/></svg>
<div class="a" style="left:683px;top:766px;width:40px;height:2px;background:#76b9ed"></div>
<svg class="a" style="left:739px;top:733px" width="28" height="28" viewBox="0 0 28 28"><circle cx="14" cy="14" r="11" fill="#db4437"/><path d="M14 14L4.5 8.5A11 11 0 0 0 14 25z" fill="#0f9d58"/><path d="M14 14h11A11 11 0 0 1 14 25z" fill="#ffcd40"/><path d="M14 14L4.5 8.5A11 11 0 0 1 14 3h0A11 11 0 0 1 23.5 8.5z" fill="#db4437"/><path d="M14 14h11a11 11 0 0 0-1.5-5.5L14 8z" fill="#ffcd40"/><circle cx="14" cy="14" r="5" fill="#fff"/><circle cx="14" cy="14" r="4" fill="#4285f4"/><circle cx="21" cy="21" r="6" fill="#c77a3a"/><circle cx="21" cy="19" r="2.5" fill="#f0d0a0"/></svg>
<svg class="a" style="left:788px;top:733px" width="28" height="28" viewBox="0 0 28 28"><circle cx="14" cy="14" r="11" fill="#db4437"/><path d="M14 14L4.5 8.5A11 11 0 0 0 14 25z" fill="#0f9d58"/><path d="M14 14h11A11 11 0 0 1 14 25z" fill="#ffcd40"/><path d="M14 14L4.5 8.5A11 11 0 0 1 14 3h0A11 11 0 0 1 23.5 8.5z" fill="#db4437"/><path d="M14 14h11a11 11 0 0 0-1.5-5.5L14 8z" fill="#ffcd40"/><circle cx="14" cy="14" r="5" fill="#fff"/><circle cx="14" cy="14" r="4" fill="#4285f4"/><circle cx="21" cy="21" r="6.5" fill="#8e44c9"/><text x="21" y="24" font-size="8" text-anchor="middle" fill="#fff" font-family="Liberation Sans">v</text></svg>
<div class="a" style="left:782px;top:766px;width:40px;height:2px;background:#76b9ed"></div>
<svg class="a" style="left:837px;top:733px" width="28" height="28" viewBox="0 0 28 28"><circle cx="14" cy="14" r="11" fill="#db4437"/><path d="M14 14L4.5 8.5A11 11 0 0 0 14 25z" fill="#0f9d58"/><path d="M14 14h11A11 11 0 0 1 14 25z" fill="#ffcd40"/><path d="M14 14L4.5 8.5A11 11 0 0 1 14 3h0A11 11 0 0 1 23.5 8.5z" fill="#db4437"/><path d="M14 14h11a11 11 0 0 0-1.5-5.5L14 8z" fill="#ffcd40"/><circle cx="14" cy="14" r="5" fill="#fff"/><circle cx="14" cy="14" r="4" fill="#4285f4"/><circle cx="21" cy="21" r="6.5" fill="#e8e8e8"/><path d="M17 19h8v2h-8zM18 22h6v3h-6z" fill="#2a5a2a"/></svg>
<div class="a" style="left:831px;top:766px;width:40px;height:2px;background:#76b9ed"></div>
<svg class="a" style="left:886px;top:733px" width="28" height="28" viewBox="0 0 28 28"><path d="M20 3l5 2.5v17L20 25 8 14z" fill="#1f9cf0"/><path d="M20 3L8 14l-4-3-2 1v4l2 1 4-3 12 11z" fill="#0065a9"/><path d="M20 8v12l-7-6z" fill="#1c1c1c"/></svg>
<div class="a" style="left:880px;top:766px;width:40px;height:2px;background:#76b9ed"></div>
<svg class="a" style="left:935px;top:733px" width="28" height="28" viewBox="0 0 28 28"><path d="M4.5 24l1.6-5A10.5 10.5 0 1 1 9.6 22.6z" stroke="#25d366" stroke-width="2.6" fill="none" stroke-linejoin="round"/><path d="M10 9c-1 1.3-.6 3.3 1.3 5.5 2 2.3 4.3 3.4 5.7 2.8l1-1.2-2.2-1.5-1 .8c-1-.4-2.4-1.8-2.8-2.8l.8-1-1.5-2.3z" fill="#25d366"/></svg>
<div class="a" style="left:929px;top:766px;width:40px;height:2px;background:#76b9ed"></div>
<svg class="a" style="left:983px;top:733px" width="28" height="28" viewBox="0 0 28 28"><ellipse cx="12" cy="16" rx="10" ry="8" fill="#cfe3f2"/><circle cx="8" cy="13" r="2" fill="#e53935"/><circle cx="12" cy="10.5" r="2" fill="#43a047"/><circle cx="7" cy="18" r="2" fill="#1e88e5"/><path d="M14 22l11-18" stroke="#f2a93b" stroke-width="3" stroke-linecap="round"/><path d="M23 3l3-1-1 3z" fill="#8d6e63"/></svg>
<div class="a" style="left:977px;top:766px;width:40px;height:2px;background:#76b9ed"></div>
<div class="a" style="left:1081px;top:738px;width:21px;height:21px;border-radius:11px;background:radial-gradient(circle at 35% 30%,#ffd000,#ff8c00 70%,#ff6a00)"></div>
<div class="a" style="left:1091px;top:733px;width:11px;height:11px;border-radius:6px;background:#d32f2f"></div>
<div class="t" style="left:1091px;top:734px;width:11px;text-align:center;font:bold 8px/9px 'Liberation Sans';color:#fff">6</div>
<div class="t" style="left:1111px;top:739px;font:13.6px/19px 'Liberation Sans';color:#f0f0f0">26°C&nbsp; Ensolarado</div>
<svg class="a" style="left:1240px;top:743px" width="14" height="9" viewBox="0 0 14 9"><path d="M1 8l6-6 6 6" stroke="#e8e8e8" stroke-width="1.4" fill="none"/></svg>
<svg class="a" style="left:1263px;top:739px" width="18" height="18" viewBox="0 0 18 18"><rect x="1.5" y="2.5" width="15" height="10" stroke="#e8e8e8" stroke-width="1.2" fill="none"/><path d="M9 12.5v3M5 15.5h8M1.5 5h3v3h-3" stroke="#e8e8e8" stroke-width="1.2" fill="none"/></svg>
<div class="t" style="left:1286px;top:730px;width:64px;text-align:center;font:11.8px/16px 'Liberation Sans';color:#f0f0f0">12:18</div>
<div class="t" style="left:1286px;top:748px;width:64px;text-align:center;font:11.8px/16px 'Liberation Sans';color:#f0f0f0">18/12/2025</div>
</body></html>
